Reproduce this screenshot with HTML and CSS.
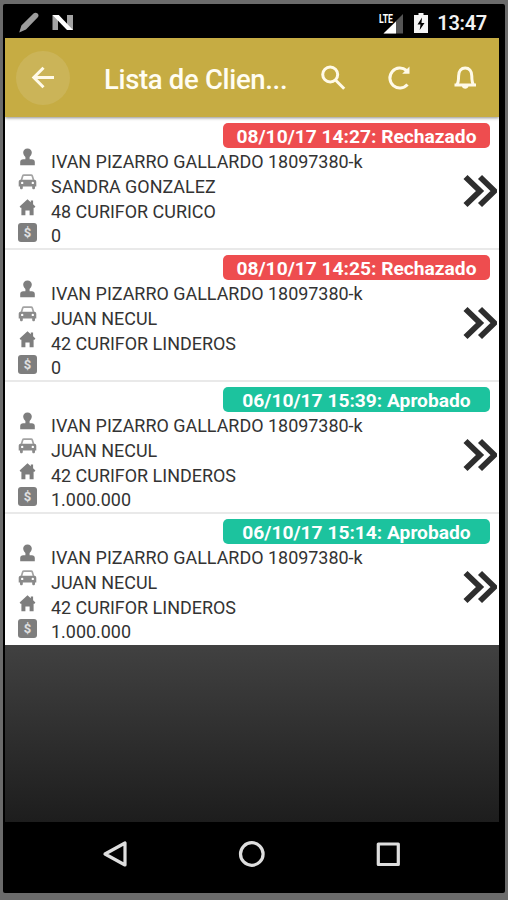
FILE: index.html
```html
<!DOCTYPE html>
<html lang="es">
<head>
  <meta charset="UTF-8" />
  <meta name="viewport" content="width=device-width, initial-scale=1.0"/>
  <title>Lista de Clientes</title>
  <link rel="stylesheet" href="styles.css">
</head>
<body>

  <!-- Shared icons -->
  <svg class="sprite" width="0" height="0">
    <symbol id="user" viewBox="0 0 19 19">
      <path d="M9.500.6c2.700 0 4.300 1.700 4.300 4 0 1.800-1 3.300-2.200 4.500v2.100h2.200c1.800 0 3 1 3 2.800v3.300H2.200V14c0-1.800 1.200-2.800 3-2.800h2.200V9.100C6.200 7.900 5.200 6.400 5.200 4.600c0-2.300 1.600-4 4.300-4z"/>
    </symbol>
    <symbol id="car" viewBox="0 0 19 19">
      <path d="M3.400 7.300L4.700 3c.2-.6.600-.9 1.200-.9h7.200c.6 0 1 .3 1.200.9l1.300 4.300" fill="none" stroke="#a3a3a3" stroke-width="1.700"/>
      <path fill-rule="evenodd" d="M2.700 6.800h13.600c1.200 0 2 .9 2 2.200v4.500H17v1.500c0 1.700-2.800 1.700-2.800 0v-1.500H4.800v1.500c0 1.700-2.800 1.700-2.800 0v-1.500H.7V9c0-1.300.8-2.200 2-2.200zM4.200 8.700a1.200 1.200 0 1 0 0 2.400 1.200 1.200 0 0 0 0-2.400zm10.600 0a1.200 1.200 0 1 0 0 2.400 1.200 1.200 0 0 0 0-2.400z" fill="#8a8a8a"/>
    </symbol>
    <symbol id="home" viewBox="0 0 19 19">
      <path d="M9.500 1.200l3.300 3V2.500h2.300v3.800l2.300 2.200-.9 1.200h-.9v7.500h-4v-4.700H7.400v4.700h-4V9.700h-.9l-.9-1.200z"/>
    </symbol>
    <symbol id="chevrons" viewBox="0 0 34 34">
      <path d="M2.500 3L17 17 2.500 31M17 3l14.500 14L17 31" fill="none" stroke="#2e2e2e" stroke-width="5.800"/>
    </symbol>
  </svg>

  <div class="phone">

    <div class="status-bar">
      <div class="status-left">
        <svg width="22" height="22" viewBox="0 0 22 22">
          <path d="M.2 20.500l2.200-7L14.500 1.500c1.300-1.200 2.900-1.100 4.100 0 1.200 1.200 1.300 2.800 0 4.100L7 17.500z" fill="#9c9c9c"/>
        </svg>
        <svg width="22" height="18" viewBox="0 0 22 18">
          <path d="M.5 1h5.500v15H.5zM15 1h6v15h-6z" fill="#a3a3a3"/>
          <path d="M.5 1h6.300L21 16h-6z" fill="#fff"/>
        </svg>
      </div>
      <div class="status-right">
        <svg width="26" height="22" viewBox="0 0 26 22">
          <path d="M25 2v19.500H5.500z" fill="#555"/>
          <path d="M18 9.500v12H5.500z" fill="#fff"/>
          <text x="1" y="11" class="lte" textLength="14" lengthAdjust="spacingAndGlyphs">LTE</text>
        </svg>
        <svg width="14" height="20" viewBox="0 0 14 20">
          <path d="M4.500 0h5v2H14v18H0V2h4.500z" fill="#f4f4f4"/>
          <path d="M8 4.500L3.500 11.500h3L5.700 17l4.800-7H7.500z" fill="#000"/>
        </svg>
        <span class="clock">13:47</span>
      </div>
    </div>

    <header class="app-bar">
      <button class="back">
        <svg width="24" height="24" viewBox="0 0 24 24">
          <path d="M23 11.500H3M12.500 1.800L2.800 11.500l9.700 9.700"/>
        </svg>
      </button>
      <h1>Lista de Clien...</h1>
      <div class="actions">
        <svg width="26" height="26" viewBox="0 0 26 26">
          <circle cx="10.200" cy="9.500" r="7.500"/>
          <path d="M15.700 15.200l8.500 8.500"/>
        </svg>
        <svg width="26" height="26" viewBox="0 0 26 26">
          <path d="M21.500 19.500A10 10 0 1 1 20.500 5.500"/>
          <path d="M23.500 1.500v7.300h-7.300z" class="solid"/>
        </svg>
        <svg width="26" height="26" viewBox="0 0 26 26">
          <path d="M5 19.500c1.300-2 1.600-4.500 1.600-8.500C6.600 5.500 9.500 2.900 13.200 2.900s6.600 2.600 6.600 8.100c0 4 .3 6.500 1.600 8.500M2.500 20h21.500"/>
          <path d="M9.900 21h6.600c-.3 3.500-6.300 3.500-6.600 0z" class="solid"/>
        </svg>
      </div>
    </header>

    <main class="list">
      <section class="card">
        <span class="badge rejected">08/10/17 14:27: Rechazado</span>
        <ul>
          <li><svg class="icon"><use href="#user"/></svg><span>IVAN PIZARRO GALLARDO 18097380-k</span></li>
          <li><svg class="icon"><use href="#car"/></svg><span>SANDRA GONZALEZ</span></li>
          <li><svg class="icon"><use href="#home"/></svg><span>48 CURIFOR CURICO</span></li>
          <li><i class="icon money">$</i><span>0</span></li>
        </ul>
        <svg class="more"><use href="#chevrons"/></svg>
      </section>

      <section class="card">
        <span class="badge rejected">08/10/17 14:25: Rechazado</span>
        <ul>
          <li><svg class="icon"><use href="#user"/></svg><span>IVAN PIZARRO GALLARDO 18097380-k</span></li>
          <li><svg class="icon"><use href="#car"/></svg><span>JUAN NECUL</span></li>
          <li><svg class="icon"><use href="#home"/></svg><span>42 CURIFOR LINDEROS</span></li>
          <li><i class="icon money">$</i><span>0</span></li>
        </ul>
        <svg class="more"><use href="#chevrons"/></svg>
      </section>

      <section class="card">
        <span class="badge approved">06/10/17 15:39: Aprobado</span>
        <ul>
          <li><svg class="icon"><use href="#user"/></svg><span>IVAN PIZARRO GALLARDO 18097380-k</span></li>
          <li><svg class="icon"><use href="#car"/></svg><span>JUAN NECUL</span></li>
          <li><svg class="icon"><use href="#home"/></svg><span>42 CURIFOR LINDEROS</span></li>
          <li><i class="icon money">$</i><span>1.000.000</span></li>
        </ul>
        <svg class="more"><use href="#chevrons"/></svg>
      </section>

      <section class="card">
        <span class="badge approved">06/10/17 15:14: Aprobado</span>
        <ul>
          <li><svg class="icon"><use href="#user"/></svg><span>IVAN PIZARRO GALLARDO 18097380-k</span></li>
          <li><svg class="icon"><use href="#car"/></svg><span>JUAN NECUL</span></li>
          <li><svg class="icon"><use href="#home"/></svg><span>42 CURIFOR LINDEROS</span></li>
          <li><i class="icon money">$</i><span>1.000.000</span></li>
        </ul>
        <svg class="more"><use href="#chevrons"/></svg>
      </section>
    </main>

    <nav class="nav-bar">
      <svg width="28" height="28" viewBox="0 0 28 28"><path d="M24 3v22L4 14z"/></svg>
      <svg width="28" height="28" viewBox="0 0 28 28"><circle cx="13.800" cy="14" r="11.300"/></svg>
      <svg width="28" height="28" viewBox="0 0 28 28"><rect x="4.300" y="4" width="20" height="20.500"/></svg>
    </nav>

  </div>

</body>
</html>
```

FILE: styles.css
```css
* {
  box-sizing: border-box;
}

body {
  margin: 0;
  padding: 4px 3px 7px;
  height: 900px;
  background: #6b6b6b;
  font-family: Roboto, sans-serif;
  overflow: hidden;
}

.sprite {
  display: block;
}

.phone {
  display: flex;
  flex-direction: column;
  height: 889px;
  padding: 0 6px 0 2px;
  background: #000;
  border-radius: 2px;
}

/* Status bar */
.status-bar {
  display: flex;
  justify-content: space-between;
  height: 34px;
  padding: 0 12px 0 14px;
}

.status-left,
.status-right {
  display: flex;
  align-items: center;
}

.status-left {
  gap: 11px;
  padding-top: 3px;
}

.status-right {
  padding-top: 4px;
}

.status-right svg {
  margin-bottom: 1px;
}

.status-right svg:first-child {
  margin-right: 10px;
}

.lte {
  fill: #fff;
  stroke: #000;
  stroke-width: 1px;
  paint-order: stroke;
  font-size: 12px;
  font-weight: 700;
}

.clock {
  margin-left: 9px;
  color: #f2f2f2;
  font-size: 20px;
  font-weight: 600;
  letter-spacing: -0.3px;
  line-height: 24px;
}

/* App bar */
.app-bar {
  position: relative;
  display: flex;
  align-items: center;
  flex-shrink: 0;
  height: 79px;
  padding: 0 21px 0 11px;
  background: #c6ac43;
  color: #fffdf2;
  box-shadow: 0 1px 3px rgba(0, 0, 0, 0.45);
}

.app-bar svg {
  fill: none;
  stroke: #fffae8;
  stroke-width: 3;
}

.app-bar .solid {
  fill: #fffae8;
  stroke: none;
}

.back {
  display: flex;
  align-items: center;
  justify-content: center;
  width: 54px;
  height: 54px;
  padding: 0;
  border: none;
  border-radius: 50%;
  background: #cbb458;
}

h1 {
  flex: 1;
  margin: 4px 0 0 34px;
  font-size: 27.5px;
  font-weight: 500;
  letter-spacing: -0.33px;
  line-height: 36px;
  white-space: nowrap;
}

.actions {
  display: flex;
  gap: 40px;
}

/* Client list */
.list {
  flex: 1;
  background: linear-gradient(#414141, #1d1d1d) 0 528px / 100% 177px no-repeat;
}

.card {
  display: grid;
  grid-template-columns: 1fr 36px;
  grid-template-rows: 25px 1fr;
  height: 132px;
  padding: 5px 0 0 13px;
  background: #fff;
  border-bottom: 2px solid #e9e9e9;
}

/* the first card takes the extra pixel under the app bar */
.card:first-child {
  height: 133px;
  padding-top: 6px;
}

.card:last-child {
  height: 131px;
  border-bottom: none;
}

.badge {
  grid-column: 1 / 3;
  justify-self: end;
  width: 267px;
  height: 25px;
  margin-right: 9px;
  border-radius: 5px;
  color: #fff;
  font-size: 19.2px;
  font-weight: 700;
  line-height: 27px;
  text-align: center;
  white-space: nowrap;
}

.rejected {
  background: #ee4d4f;
}

.approved {
  background: #1cc39e;
}

ul {
  margin: 0;
  padding: 0;
  list-style: none;
}

li {
  display: flex;
  align-items: flex-start;
  gap: 14px;
  height: 24.8px;
  color: #333;
  font-size: 17.95px;
  line-height: 27px;
  white-space: nowrap;
}

.icon {
  flex-shrink: 0;
  width: 19px;
  height: 19px;
  fill: #7e7e7e;
}

.money {
  margin-top: 1px;
  border-radius: 3px;
  background: #7e7e7e;
  color: #e0e0e0;
  font-size: 13px;
  font-style: normal;
  font-weight: 700;
  line-height: 19px;
  text-align: center;
}

.more {
  width: 34px;
  height: 34px;
  margin-top: 26px;
}

/* Navigation bar */
.nav-bar {
  display: flex;
  align-items: center;
  justify-content: space-between;
  height: 71px;
  padding: 0 97px 7px 96px;
}

.nav-bar svg {
  fill: none;
  stroke: #dedede;
  stroke-width: 3.2;
  stroke-linejoin: round;
}
```
